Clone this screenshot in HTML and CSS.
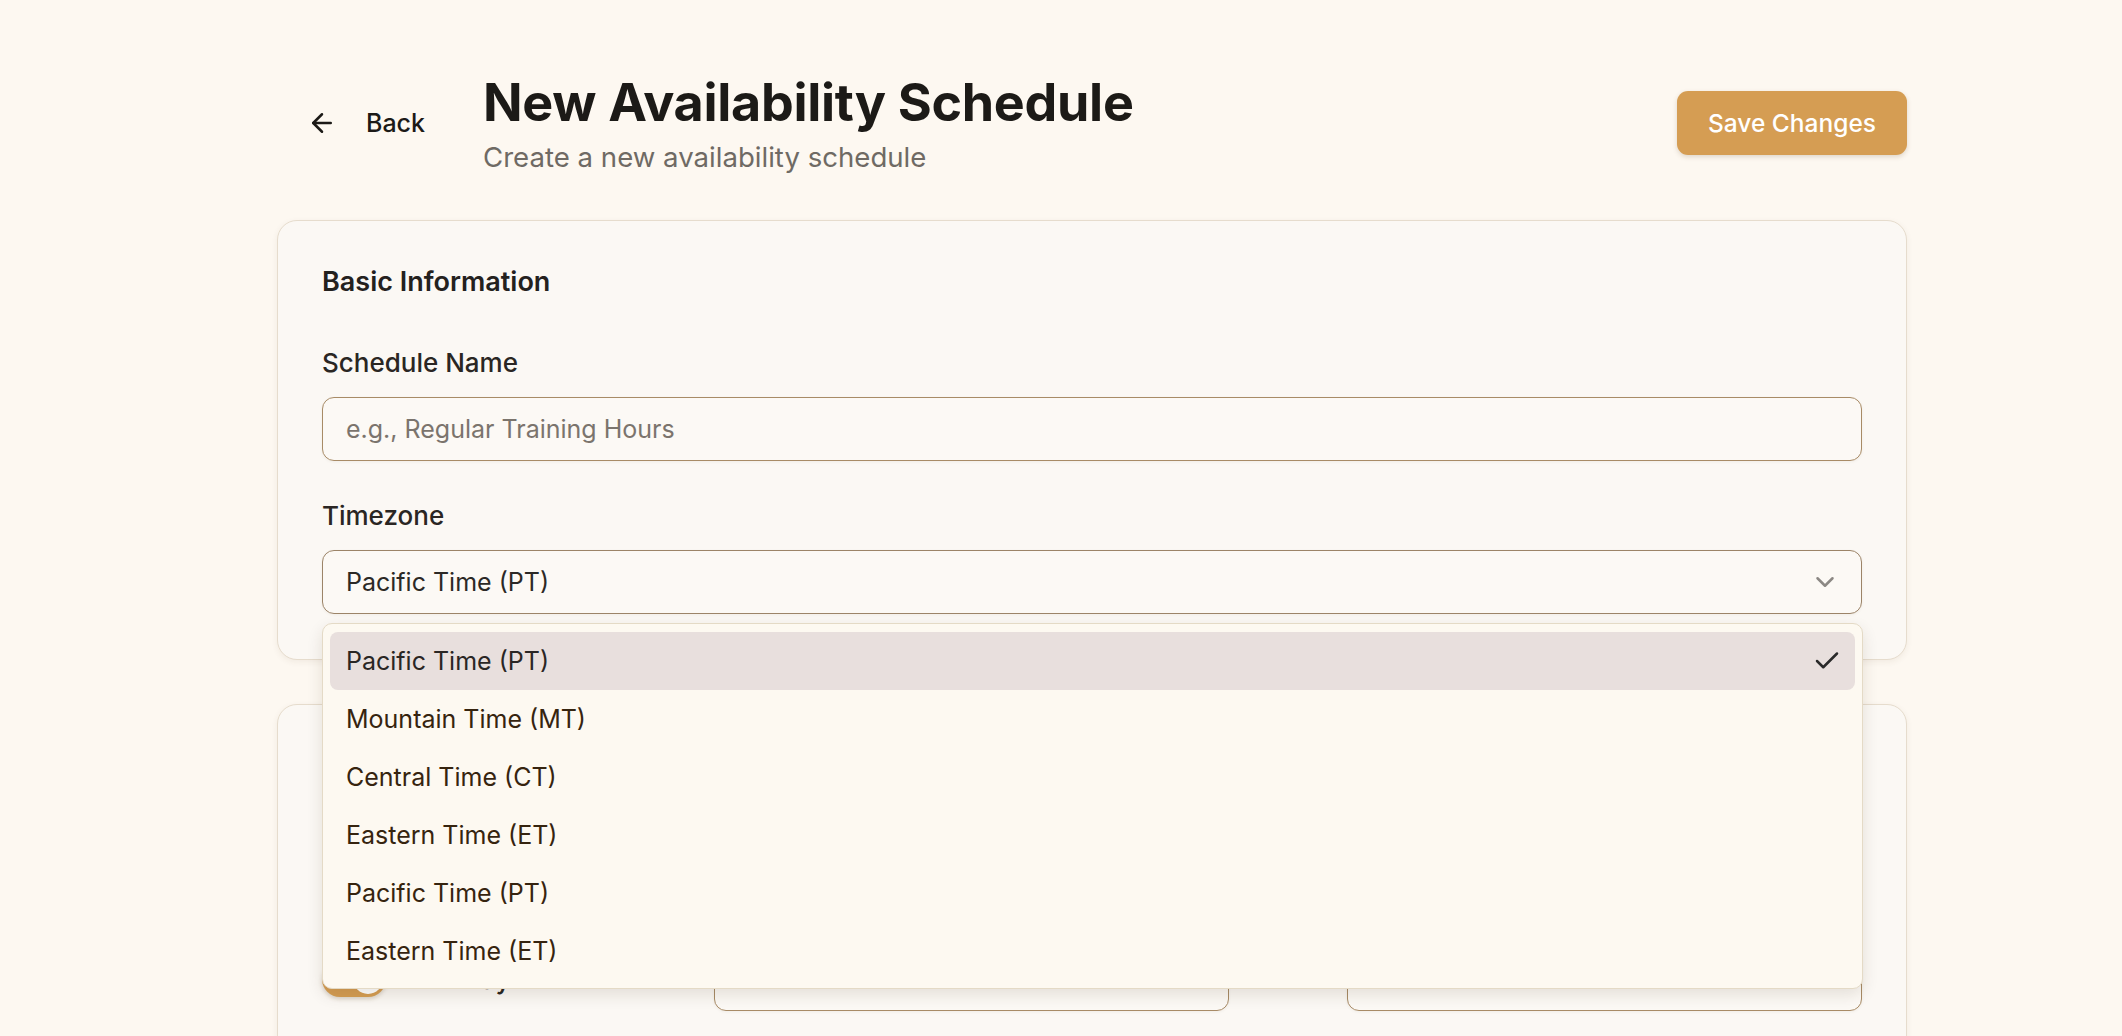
FILE: index.html
```html
<!DOCTYPE html>
<html lang="en">
<head>
    <meta charset="UTF-8">
    <meta name="viewport" content="width=device-width, initial-scale=1.0">
    <title>New Availability Schedule</title>
    <link rel="stylesheet" href="styles.css">
</head>
<body>

    <div class="page">
        <header class="page-header">
            <button class="back-button">
                <svg class="icon" viewBox="0 0 24 24" fill="none" stroke="currentColor" stroke-width="2" stroke-linecap="round" stroke-linejoin="round">
                    <path d="m12 19-7-7 7-7"/>
                    <path d="M19 12H5"/>
                </svg>
                <span>Back</span>
            </button>
            <div class="title-block">
                <h1>New Availability Schedule</h1>
                <p>Create a new availability schedule</p>
            </div>
            <button class="save-button">Save Changes</button>
        </header>

        <section class="card">
            <h2>Basic Information</h2>

            <div class="field">
                <label for="schedule-name">Schedule Name</label>
                <input id="schedule-name" type="text" placeholder="e.g., Regular Training Hours">
            </div>

            <div class="field">
                <label>Timezone</label>
                <div class="select-wrap">
                    <div class="select">
                        <span>Pacific Time (PT)</span>
                        <svg class="icon chevron" viewBox="0 0 24 24" fill="none" stroke="currentColor" stroke-width="2" stroke-linecap="round" stroke-linejoin="round">
                            <path d="m6 9 6 6 6-6"/>
                        </svg>
                    </div>

                    <!-- open listbox -->
                    <ul class="options">
                        <li class="option selected">
                            <span>Pacific Time (PT)</span>
                            <svg class="icon check" viewBox="0 0 24 24" fill="none" stroke="currentColor" stroke-width="2" stroke-linecap="round" stroke-linejoin="round">
                                <path d="M20 6 9 17l-5-5"/>
                            </svg>
                        </li>
                        <li class="option">Mountain Time (MT)</li>
                        <li class="option">Central Time (CT)</li>
                        <li class="option">Eastern Time (ET)</li>
                        <li class="option">Pacific Time (PT)</li>
                        <li class="option">Eastern Time (ET)</li>
                    </ul>
                </div>
            </div>
        </section>

        <section class="card">
            <div class="card-header">
                <h2>Weekly Hours</h2>
                <p>Set the hours you are available each day</p>
            </div>

            <div class="day-columns">
                <span>Day</span>
                <span>Start Time</span>
                <span></span>
                <span>End Time</span>
            </div>

            <div class="day-row">
                <div class="day-name">
                    <span class="toggle on"><span class="knob"></span></span>
                    <span>Monday</span>
                </div>
                <input type="text" value="09:00">
                <span class="to">to</span>
                <input type="text" value="17:00">
            </div>

            <div class="day-row">
                <div class="day-name">
                    <span class="toggle on"><span class="knob"></span></span>
                    <span>Tuesday</span>
                </div>
                <input type="text" value="09:00">
                <span class="to">to</span>
                <input type="text" value="17:00">
            </div>
        </section>
    </div>

</body>
</html>
```

FILE: styles.css
```css
* {
    box-sizing: border-box;
}

body {
    margin: 0;
    background-color: #fdf8f1;
    font-family: Inter, 'Noto Sans', sans-serif;
    color: #1c1a17;
}

.page {
    width: 1630px;
    margin-left: 277px;
    padding-top: 71px;
}

.icon {
    width: 30px;
    height: 30px;
    flex-shrink: 0;
}

/* header */

.page-header {
    display: flex;
    align-items: center;
    gap: 28px;
    margin-bottom: 45px;
}

.back-button {
    display: flex;
    align-items: center;
    gap: 29px;
    height: 64px;
    padding: 0 30px;
    background: none;
    border: none;
    font-family: inherit;
    font-size: 25px;
    font-weight: 500;
    color: #1c1a17;
    cursor: pointer;
}

.title-block h1 {
    margin: 0;
    font-size: 52px;
    line-height: 64px;
    font-weight: 700;
    letter-spacing: -0.3px;
    color: #1c1a17;
}

.title-block p {
    margin: 4px 0 0;
    font-size: 27.6px;
    line-height: 36px;
    color: #6f6a64;
}

.save-button {
    margin-left: auto;
    height: 64px;
    padding: 0 31px;
    background-color: #d59d53;
    color: white;
    border: none;
    border-radius: 11px;
    font-family: inherit;
    font-size: 24.5px;
    font-weight: 500;
    box-shadow: 0 2px 5px rgba(90, 60, 20, 0.18);
    cursor: pointer;
}

/* cards */

.card {
    background-color: #fbf8f4;
    border: 1px solid #e6dccd;
    border-radius: 20px;
    padding: 43px 44px 45px;
    box-shadow: 0 2px 6px rgba(80, 60, 30, 0.07);
    margin-bottom: 44px;
}

.card h2 {
    margin: 0 0 45px;
    font-size: 27px;
    line-height: 36px;
    font-weight: 600;
    color: #24211e;
}

.field + .field {
    margin-top: 37px;
}

.field label {
    display: block;
    margin-bottom: 16px;
    font-size: 26px;
    line-height: 36px;
    font-weight: 500;
    color: #2a2623;
}

input[type="text"],
.select {
    width: 100%;
    height: 64px;
    padding: 0 23px;
    background-color: #fcf9f5;
    border: 1px solid #a88b66;
    border-radius: 12px;
    font-family: inherit;
    font-size: 25px;
    color: #2c2926;
    box-shadow: 0 1px 3px rgba(80, 60, 30, 0.06);
    outline: none;
}

input::placeholder {
    color: #7b746d;
}

/* select + open listbox */

.select-wrap {
    position: relative;
}

.select {
    display: flex;
    align-items: center;
    justify-content: space-between;
    padding-right: 21px;
    border-color: #9c8468;
}

.chevron {
    color: #8c8884;
}

.options {
    position: absolute;
    top: calc(100% + 9px);
    left: 0;
    right: -1px;
    z-index: 10;
    list-style: none;
    margin: 0;
    padding: 8px 7px;
    background-color: #fdf9f1;
    border: 1px solid #e4dac6;
    border-radius: 10px;
    box-shadow: 0 6px 16px rgba(60, 40, 20, 0.12);
}

.option {
    display: flex;
    align-items: center;
    justify-content: space-between;
    height: 58px;
    padding: 0 13px 0 16px;
    border-radius: 8px;
    font-size: 25px;
    color: #36240f;
}

.option.selected {
    background-color: #e8dfdd;
    color: #2a2624;
}

.check {
    color: #2a2a2a;
}

/* weekly hours */

.card-header h2 {
    margin: 0;
}

.card-header p {
    margin: 6px 0 0;
    font-size: 25px;
    line-height: 36px;
    color: #6f6a64;
}

.day-columns {
    display: grid;
    grid-template-columns: 392px 1fr 118px 1fr;
    margin-top: 30px;
    padding-bottom: 24px;
    margin-bottom: 30px;
    border-bottom: 1px solid #ece3d6;
    font-size: 24px;
    line-height: 36px;
    color: #6f6a64;
}

.day-row {
    display: grid;
    grid-template-columns: 392px 1fr 118px 1fr;
    align-items: center;
    margin-bottom: 40px;
}

.day-name {
    display: flex;
    align-items: center;
    gap: 24px;
    font-size: 26px;
    font-weight: 500;
    color: #2a2623;
}

.toggle {
    display: flex;
    align-items: center;
    width: 64px;
    height: 36px;
    padding: 3px;
    border-radius: 18px;
    background-color: #d59d53;
    box-shadow: 0 2px 4px rgba(90, 60, 20, 0.2);
}

.toggle.on {
    justify-content: flex-end;
}

.knob {
    width: 30px;
    height: 30px;
    border-radius: 50%;
    background-color: white;
}

.to {
    text-align: center;
    font-size: 24px;
    color: #8a847d;
}
```
